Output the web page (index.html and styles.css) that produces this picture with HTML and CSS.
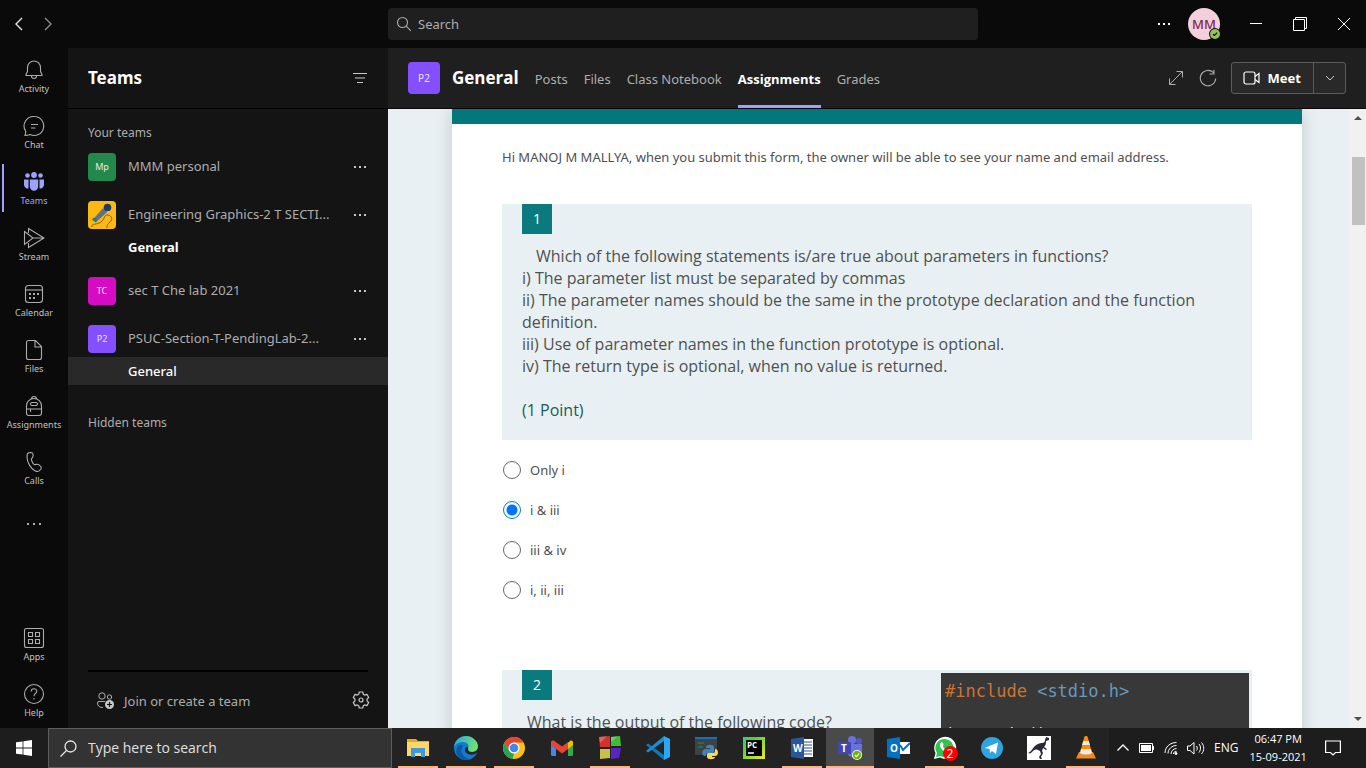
FILE: index.html
```html
<!DOCTYPE html>
<html lang="en">
<head>
<meta charset="utf-8">
<title>General | Microsoft Teams</title>
<link rel="stylesheet" href="styles.css">
</head>
<body>
<div class="desktop">
  <header class="titlebar">
    <nav class="history" aria-label="History">
      <button class="icon-btn" aria-label="Back"><svg width="10" height="14" viewBox="0 0 10 14" fill="none" stroke="#e6e6e6" stroke-width="1.4"><path d="M8 1L2 7l6 6"/></svg></button>
      <button class="icon-btn" aria-label="Forward"><svg width="10" height="14" viewBox="0 0 10 14" fill="none" stroke="#8a8a8a" stroke-width="1.4"><path d="M2 1l6 6-6 6"/></svg></button>
    </nav>
    <label class="search">
      <svg width="16" height="16" viewBox="0 0 16 16" fill="none" stroke="#adadad" stroke-width="1.1"><circle cx="6.5" cy="6.500" r="5"/><path d="M10.200 10.200l4.600 4.600"/></svg>
      <input type="text" placeholder="Search" aria-label="Search">
    </label>
    <div class="window-tools">
      <button class="icon-btn more" aria-label="Settings and more"><svg width="14" height="4" viewBox="0 0 14 4" fill="#fff"><path d="M1 1h2v2H1zM6 1h2v2H6zM11 1h2v2h-2z"/></svg></button>
      <button class="avatar" aria-label="Account">MM<svg class="presence" width="12" height="12" viewBox="0 0 12 12"><circle cx="6" cy="6" r="6" fill="#0a0a0a"/><circle cx="6" cy="6" r="5" fill="#92c353"/><path d="M4 6.200l1.400 1.300L8.200 4.800" fill="none" stroke="#0a0a0a" stroke-width="1.200"/></svg></button>
      <button class="icon-btn win" aria-label="Minimize"><svg width="12" height="2" viewBox="0 0 12 2"><path d="M0 0h12v1H0z" fill="#fff"/></svg></button>
      <button class="icon-btn win" aria-label="Restore"><svg width="14" height="14" viewBox="0 0 14 14" fill="none" stroke="#fff"><path d="M.5 2.500h11v11H.5zM2.500 2.500v-2h11v11h-2"/></svg></button>
      <button class="icon-btn win" aria-label="Close"><svg width="12" height="12" viewBox="0 0 12 12" stroke="#fff"><path d="M0 0l12 12M12 0L0 12"/></svg></button>
    </div>
  </header>

  <div class="app">
    <nav class="rail" aria-label="Apps">
      <a class="rail-item" href="#"><svg viewBox="0 0 22 22"><path d="M3 16.500v-1l1.500-3V8.500a6.500 6.500 0 0 1 13 0v4l1.500 3v1zM8.500 17a2.500 2.500 0 0 0 5 0"/></svg>Activity</a>
      <a class="rail-item" href="#"><svg viewBox="0 0 22 22"><path d="M11.500 1.500a9.500 9.500 0 1 1-4.500 18c-2 .8-3.500 1-5 1 .6-1.500.8-2.800.7-4.300A9.500 9.500 0 0 1 11.500 1.500zM8 9.500h7M8 13h4.500"/></svg>Chat</a>
      <a class="rail-item rail-item--active" href="#"><svg viewBox="0 0 22 22"><circle cx="4.500" cy="4.500" r="2.300"/><circle cx="17.500" cy="4.500" r="2.300"/><circle cx="11" cy="4" r="2.900"/><path d="M1 8.500h4.500v9A4 4 0 0 1 1 14zM21 8.500h-4.500v9A4 4 0 0 0 21 14zM6.800 8.500h8.400v7a4.200 4.200 0 0 1-8.400 0z"/></svg>Teams</a>
      <a class="rail-item" href="#"><svg viewBox="0 0 22 22"><path d="M5.500 6V1.500L21 11 5.500 20.500V16M1.500 4.500L10 11l-8.500 6.500zM10 11h11"/></svg>Stream</a>
      <a class="rail-item" href="#"><svg viewBox="0 0 22 22"><rect x="2.500" y="2.500" width="17" height="17" rx="3"/><path d="M2.500 7h17"/><path d="M6 11h2M10 11h2M14 11h2M6 15h2M10 15h2" stroke-width="2"/></svg>Calendar</a>
      <a class="rail-item" href="#"><svg viewBox="0 0 22 22"><path d="M5.500 1.500h7l6 6v11a2 2 0 0 1-2 2h-11a2 2 0 0 1-2-2v-15a2 2 0 0 1 2-2zM12 1.500V8h6.500"/></svg>Files</a>
      <a class="rail-item" href="#"><svg viewBox="0 0 22 22"><path d="M3.500 11a7.500 7.500 0 0 1 15 0v7a2.500 2.500 0 0 1-2.500 2.500H6A2.500 2.500 0 0 1 3.500 18zM8.500 4a2.500 2.500 0 0 1 5 0M3.500 14h15M7.500 14v3"/><rect x="7.500" y="7.500" width="7" height="3" rx="1.500"/></svg>Assignments</a>
      <a class="rail-item" href="#"><svg viewBox="0 0 22 22"><path d="M5.500 1.800L8 1.500c1 0 1.700.7 2 1.800.5 2 0 3-1.500 4.500-.5.500.8 4 2.500 5.500.7.700 1.500.3 2.500 0 1.600-.5 2.600.3 4.300 2.200.8 1 .6 1.800 0 2.800-1.300 2-3.300 2.700-5.500 1.700-4.500-2-8.300-9-8.300-14 0-2 .3-3.700 1.500-4.200z"/></svg>Calls</a>
      <button class="rail-item rail-more" aria-label="More apps"><svg viewBox="0 0 22 22"><path d="M4 10h2v2H4zM10 10h2v2h-2zM16 10h2v2h-2z" fill="#adadad" stroke="none"/></svg></button>
      <a class="rail-item rail-bottom" href="#"><svg viewBox="0 0 22 22"><rect x="1.500" y="1.500" width="19" height="19" rx="2"/><path d="M5.500 5.500h4v4h-4zM12.500 5.500h4v4h-4zM5.500 12.500h4v4h-4zM12.500 12.500h4v4h-4z"/></svg>Apps</a>
      <a class="rail-item" href="#"><svg viewBox="0 0 22 22"><circle cx="11" cy="11" r="9.500"/><path d="M8.200 8.500c0-3.800 5.600-3.600 5.600-.3 0 2.200-2.800 2.200-2.800 5M11 15v1.500"/></svg>Help</a>
    </nav>

    <aside class="teams">
      <div class="teams-head"><h1>Teams</h1>
        <button class="icon-btn" aria-label="Filter"><svg width="16" height="10" viewBox="0 0 16 10" stroke="#c8c8c8"><path d="M1 .5h14M3 5h10M5 9.500h6"/></svg></button>
      </div>
      <div class="teams-list">
        <h2 class="group-label">Your teams</h2>
        <section class="team">
          <div class="team-row"><span class="logo logo--green">Mp</span><span class="team-name">MMM personal</span><button class="dots" aria-label="More options"></button></div>
        </section>
        <section class="team team--open">
          <div class="team-row"><span class="logo logo--yellow"><svg width="28" height="28" viewBox="0 0 28 28"><path d="M4 26c-1-4 5-2 9-5s3-8 7-7 5 4 2 7-3 3-3 6" fill="none" stroke="#8a5c10" stroke-width="1"/><path d="M4.500 19L16 6l4.500 4L8 21z" fill="#5d7389"/><path d="M4 18.500l4 3 1-2.500-3-2.500z" fill="#14808f"/><path d="M15 7l5 4.500 1.500-1.500-5-4.500z" fill="#c9d7df"/><circle cx="19.500" cy="6.500" r="3.800" fill="#1d3c6c"/></svg></span><span class="team-name">Engineering Graphics-2 T SECTI...</span><button class="dots" aria-label="More options"></button></div>
          <a class="channel channel--unread" href="#">General</a>
        </section>
        <section class="team">
          <div class="team-row"><span class="logo logo--pink">TC</span><span class="team-name">sec T Che lab 2021</span><button class="dots" aria-label="More options"></button></div>
        </section>
        <section class="team team--open">
          <div class="team-row"><span class="logo logo--purple">P2</span><span class="team-name">PSUC-Section-T-PendingLab-2...</span><button class="dots" aria-label="More options"></button></div>
          <a class="channel channel--selected" href="#">General</a>
        </section>
        <h2 class="group-label group-label--hidden">Hidden teams</h2>
      </div>
      <div class="teams-foot">
        <button class="join"><svg width="20" height="18" viewBox="0 0 20 18" fill="none" stroke="#adadad"><circle cx="6" cy="4" r="3.200"/><circle cx="13.500" cy="5" r="2.200"/><path d="M9 9.500H3A1.500 1.500 0 0 0 1.500 11c0 3 2 4.500 5.500 4.500"/><circle cx="13.500" cy="12.500" r="4.500" fill="#c8c8c8" stroke="none"/><path d="M13.500 10v5M11 12.500h5" stroke="#141414" stroke-width="1.200"/></svg>Join or create a team</button>
        <button class="icon-btn" aria-label="Manage teams"><svg width="18" height="18" viewBox="0 0 18 18" fill="none" stroke="#c8c8c8" stroke-width="1.200"><path d="M7.200 1h3.600l.5 2.300 1.400.8 2.200-.7 1.800 3.100L15 8.200v1.600l1.700 1.700-1.800 3.100-2.200-.7-1.400.8-.5 2.300H7.200l-.5-2.300-1.400-.8-2.200.7-1.800-3.100L3 9.800V8.200L1.300 6.500l1.800-3.100 2.200.7 1.400-.8z" stroke-linejoin="round"/><circle cx="9" cy="9" r="2"/></svg></button>
      </div>
    </aside>

    <main class="content">
      <div class="channel-head">
        <span class="logo logo--purple logo--large">P2</span>
        <h2>General</h2>
        <nav class="tabs">
          <a href="#">Posts</a><a href="#">Files</a><a href="#">Class Notebook</a><a class="tab--active" href="#">Assignments</a><a href="#">Grades</a>
        </nav>
        <button class="icon-btn tool" aria-label="Expand"><svg width="16" height="16" viewBox="0 0 16 16" fill="none" stroke="#adadad"><path d="M8.500 1.500h6v6M1.500 8.500v6h6M14.500 1.500l-13 13"/></svg></button>
        <button class="icon-btn tool" aria-label="Reload"><svg width="18" height="18" viewBox="0 0 18 18" fill="none" stroke="#adadad" stroke-width="1.100"><path d="M16.700 9.500A7.700 7.700 0 1 1 14.500 3.700M15 .8v4.200h-4.500"/></svg></button>
        <div class="meet"><button class="meet-main"><svg width="18" height="14" viewBox="0 0 18 14" fill="none" stroke="#fff" stroke-width="1.200"><rect x="1" y="1" width="11" height="12" rx="2"/><path d="M12 5.500l4-3v9l-4-3"/></svg>Meet</button><button class="meet-menu" aria-label="Meet options"><svg width="10" height="6" viewBox="0 0 10 6" fill="none" stroke="#c8c8c8"><path d="M1 1l4 4 4-4"/></svg></button></div>
      </div>

      <div class="viewport">
        <form class="sheet">
          <p class="notice">Hi MANOJ M MALLYA, when you submit this form, the owner will be able to see your name and email address.</p>
          <fieldset class="question">
            <div class="prompt">
              <span class="number">1</span>
              <div class="prompt-text">
                <p class="lead">Which of the following statements is/are true about parameters in functions?</p>
                <p>i) The parameter list must be separated by commas</p>
                <p>ii) The parameter names should be the same in the prototype declaration and the function definition.</p>
                <p>iii) Use of parameter names in the function prototype is optional.</p>
                <p>iv) The return type is optional, when no value is returned.</p>
                <p class="points">(1 Point)</p>
              </div>
            </div>
            <div class="choices">
              <label><input type="radio" name="q1">Only i</label>
              <label><input type="radio" name="q1" checked>i &amp; iii</label>
              <label><input type="radio" name="q1">iii &amp; iv</label>
              <label><input type="radio" name="q1">i, ii, iii</label>
            </div>
          </fieldset>
          <fieldset class="question">
            <div class="prompt prompt--split">
              <div>
                <span class="number">2</span>
                <div class="prompt-text"><p class="indent">What is the output of the following code?</p></div>
              </div>
              <pre class="code"><span class="directive">#include</span> <span class="header">&lt;stdio.h&gt;</span>

int main()</pre>
            </div>
          </fieldset>
        </form>
        <div class="scrollbar" aria-hidden="true">
          <svg width="8" height="4" viewBox="0 0 8 4"><path d="M0 4l4-4 4 4z" fill="#505050"/></svg>
          <div class="thumb"></div>
          <svg class="down" width="8" height="4" viewBox="0 0 8 4"><path d="M0 0l4 4 4-4z" fill="#505050"/></svg>
        </div>
      </div>
    </main>
  </div>

  <footer class="taskbar">
    <button class="start" aria-label="Start"><svg width="16" height="16" viewBox="0 0 16 16" fill="#fff"><path d="M0 2.300l6.600-.9v6.200H0zM7.400 1.300L16 0v7.600H7.400zM0 8.400h6.600v6.200L0 13.700zM7.400 8.400H16V16l-8.600-1.200z"/></svg></button>
    <label class="task-search"><svg width="17" height="17" viewBox="0 0 17 17" fill="none" stroke="#e8e8e8" stroke-width="1.300"><circle cx="10.500" cy="6.500" r="5.500"/><path d="M6.500 10.500l-6 6"/></svg><input type="text" placeholder="Type here to search" aria-label="Type here to search"></label>
    <div class="apps">
      <button class="task running" aria-label="File Explorer"><svg viewBox="0 0 24 24"><path d="M1 3h9l2 2h11v15H1z" fill="#e9a820"/><path d="M1 6h22v14H1z" fill="#ffd766"/><path d="M5 12h14v9h-4v-4H9v4H5z" fill="#3f97de"/></svg></button>
      <button class="task running" aria-label="Edge"><svg viewBox="0 0 24 24"><defs><linearGradient id="edge" x2="1" y2=".3"><stop stop-color="#22a6e8"/><stop offset="1" stop-color="#6ee070"/></linearGradient></defs><circle cx="12" cy="12" r="12" fill="#1479cf"/><path d="M0 11C1 4 6 0 12 0s12 5 12 10c0 4-3 6-6 6s-4-1-4-3c2-4-1-7-5-7-5 0-8 3-9 5z" fill="url(#edge)"/><path d="M9 10c-4 5 0 12 7 13C6 26 0 18 3 12c1-3 4-4 6-2z" fill="#0c59a4"/><path d="M14 13c0 2 1 3 4 3 2 0 5-1 6-4v4l-3 2c-4 2-9 0-10-3-.5-2 1-4 2-4 1 .5 1 1 1 2z" fill="#252627"/></svg></button>
      <button class="task running" aria-label="Chrome"><svg viewBox="0 0 24 24"><circle cx="12" cy="12" r="11" fill="#fbc116"/><path d="M2.500 6.500A11 11 0 0 1 21.500 6.500H12l-4.700 8.200z" fill="#ea4335"/><path d="M2.500 6.500l4.800 8.200L12 17.500l-1.500 5.400A11 11 0 0 1 2.500 6.500z" fill="#2ba24c"/><circle cx="12" cy="12" r="5.500" fill="#fff"/><circle cx="12" cy="12" r="4.300" fill="#4285f4"/></svg></button>
      <button class="task" aria-label="Gmail"><svg viewBox="0 0 24 24"><path d="M1 6h5v14H2.500A1.500 1.500 0 0 1 1 18.500z" fill="#4285f4"/><path d="M18 6h5v12.500a1.500 1.500 0 0 1-1.500 1.500H18z" fill="#34a853"/><path d="M18 7l2-2c1.500-1 3 0 3 1.500V9l-5 4z" fill="#fbbc04"/><path d="M1 9V6.500C1 4.500 3 4 4.500 5L12 10.500l6-4.500v7l-6 4.500L1 9z" fill="#ea4335"/></svg></button>
      <button class="task running" aria-label="Code::Blocks"><svg viewBox="0 0 24 24"><path d="M1 1l11-1v11H2z" fill="#d6322b"/><path d="M13 1l9-1 1 10H13z" fill="#3fbf36"/><path d="M2 13h10v9l-10 1z" fill="#c9c04a"/><path d="M13 12h10l-2 10-8 1z" fill="#5a24c8"/><path d="M1 1l8-1-7 7zM13 1l7-1-7 6z" fill="#fff" opacity=".25"/></svg></button>
      <button class="task" aria-label="Visual Studio Code"><svg viewBox="0 0 24 24"><path d="M0 9l2-1.500L18 19v5L0 9z" fill="#1276b8"/><path d="M0 15l2 1.500L18 5V0L0 15z" fill="#1b8fd6"/><path d="M18 0l6 3v18l-6 3z" fill="#2ca7f2"/></svg></button>
      <button class="task" aria-label="Python"><svg viewBox="0 0 24 24"><path d="M1 1h22v18H1z" fill="#3a4446"/><path d="M1 1h22v2H1z" fill="#1672b5"/><path d="M4 7h6M4 11h5" stroke="#3f7248" stroke-width="1.500"/><path d="M12 11c0-3 8-3 8 0v4c0 2-1 2-3 2h-3c-2 0-2 1-2 3-5 1-5-7 0-7h4v-1h-4z" fill="#4382b8"/><path d="M21 13c4 0 4 7 0 7h-3v1h3c0 3-8 3-8 0v-2c0-2 1-2 3-2h3c2 0 2-1 2-4z" fill="#ffd94d"/></svg></button>
      <button class="task" aria-label="PyCharm"><svg viewBox="0 0 24 24"><defs><linearGradient id="pc" y2="1"><stop stop-color="#21d789"/><stop offset=".3" stop-color="#4fd62a"/><stop offset="1" stop-color="#f5e53b"/></linearGradient></defs><path d="M1 1h22v22H1z" fill="url(#pc)"/><path d="M4 4h16v16H4z"/><path d="M6 17h6" stroke="#fff" stroke-width="1.500"/><text class="g8" x="5" y="12">PC</text></svg></button>
      <button class="task running" aria-label="Word"><svg viewBox="0 0 24 24"><path d="M12 3h11v18H12z" fill="#fff"/><path d="M14 6h8M14 9h8M14 12h8M14 15h8M14 18h8" stroke="#2b579a"/><path d="M1 3l13-2v22L1 21z" fill="#2b579a"/><text class="g10" x="3" y="16">W</text></svg></button>
      <button class="task running task--active" aria-label="Teams"><svg viewBox="0 0 24 24"><circle cx="14" cy="4" r="4" fill="#6b72d6"/><circle cx="21" cy="5" r="3" fill="#505ac9"/><path d="M8 8h16v7a6 6 0 0 1-6 7c-5 0-9-3-10-7z" fill="#6872dd"/><path d="M0 6h13v12H0z" fill="#4248ab"/><text class="g10" x="3" y="16">T</text><circle cx="19" cy="19" r="5" fill="#fff"/><circle cx="19" cy="19" r="4.200" fill="#6bb700"/><path d="M16.800 19l1.600 1.600 2.800-3" fill="none" stroke="#fff" stroke-width="1.200"/></svg></button>
      <button class="task" aria-label="Outlook"><svg viewBox="0 0 24 24"><path d="M12 6h12v12H12z" fill="#fff"/><path d="M14 9l3 5 7-7" fill="none" stroke="#0072c6" stroke-width="2"/><path d="M1 3l13-2v22L1 21z" fill="#0072c6"/><text class="g10" x="4" y="16">O</text></svg></button>
      <button class="task running" aria-label="WhatsApp, 2 new"><svg viewBox="0 0 24 24"><path d="M1 23l1.500-6A11 11 0 1 1 7 21.500z" fill="#fff"/><path d="M3 21l1-4a9 9 0 1 1 3.500 3z" fill="#2cc64f"/><path d="M8 6.500c1.500-1 2.500 1 2.500 2.500-1 1-.5 2 1 3.500s2.500 1.500 3.500.5c1 0 3 1 2 2.500-2 2.500-6 .5-8-2s-3-5-1-7z" fill="#fff"/></svg><span class="count">2</span></button>
      <button class="task" aria-label="Telegram"><svg viewBox="0 0 24 24"><circle cx="12" cy="12" r="11" fill="#2ca5e0"/><path d="M4.500 12L18 6.500 16 18l-4-3-2 2-.5-4z" fill="#fff"/></svg></button>
      <button class="task" aria-label="Dinosaur"><svg viewBox="0 0 24 24"><path d="M0 0h24v24H0z" fill="#fff"/><path d="M1 17c3-1 4-4 6-6 3-3 5-4 8-4 2 0 3-1 3-3l1-3 3 1v2l-3 1c0 4-1 5-2 6l3 2-1 1-3-2-1 3 1 2-2 4 1 2h-2l-1-2 2-3-1-3-2-1c-3-1-4 0-6 2-1 1-2 2-4 1z" fill="#2c2736"/></svg></button>
      <button class="task running" aria-label="VLC"><svg viewBox="0 0 24 24"><path d="M5 16h14l3 6.500H2z" fill="#f08a1c"/><path d="M12 0c1 0 1.500.5 1.700 1L18 17c-1 3-11 3-12 0l4.300-16c.2-.5.700-1 1.700-1z" fill="#ff8a00"/><path d="M9.300 5h5.400l1.300 4H8zM7 13h10l1 4c-2 2-10 2-12 0z" fill="#e9e9e9"/></svg></button>
    </div>
    <div class="tray">
      <svg width="14" height="10" viewBox="0 0 14 10" fill="none" stroke="#fff" stroke-width="1.300"><path d="M1.500 7.500L7 2l5.500 5.500"/></svg>
      <svg width="16" height="10" viewBox="0 0 16 10"><path d="M.5.5h13v9H.5z" fill="none" stroke="#fff"/><path d="M2 2h10v6H2zM14 3h1v4h-1z" fill="#fff"/></svg>
      <svg width="14" height="14" viewBox="0 0 14 14" fill="none" stroke="#fff"><path d="M1 12C1 6 6 1.500 12.500 1.500M4 12.500C4 8 8 4.500 12.500 4.500M7 13c0-3 2.500-5.500 5.500-5.500M9.500 13c0-1.500 1-2.700 3-2.700"/><circle cx="12" cy="12.500" r="1" fill="#fff"/></svg>
      <svg width="18" height="14" viewBox="0 0 18 14" fill="none" stroke="#fff"><path d="M.5 5v4.500H3l4 3.500V1.500L3 5zM9.500 5c1 1.500 1 3 0 4.500M12 3c2 2.500 2 5.500 0 8.500M14.500 1.500c3 3.500 3 8 0 11.500"/></svg>
      <span class="lang">ENG</span>
      <time class="clock"><span>06:47 PM</span><span>15-09-2021</span></time>
      <button class="icon-btn notify" aria-label="Notifications"><svg width="16" height="17" viewBox="0 0 16 17" fill="none" stroke="#fff" stroke-width="1.200"><path d="M.6 1h14.800v11.500H10.500L8 15l-2.500-2.500H.6z"/></svg></button>
    </div>
  </footer>
</div>
</body>
</html>
```
FILE: styles.css
```css
* { box-sizing: border-box; }
body { margin: 0; font-family: "Noto Sans", "Open Sans", sans-serif; font-size: 13px; line-height: 20px; color: #adadad; background: #0a0a0a; }
h1, h2, p, pre, fieldset { margin: 0; padding: 0; border: 0; }
button, input { font: inherit; color: inherit; background: none; border: 0; padding: 0; margin: 0; }
a { color: inherit; text-decoration: none; }
svg { display: block; flex: none; }
.icon-btn { display: flex; align-items: center; justify-content: center; }

.desktop { height: 100vh; display: grid; grid-template-rows: 48px minmax(0, 1fr) 40px; overflow: hidden; }

.titlebar { display: grid; grid-template-columns: 388px minmax(0, 590px) minmax(0, 1fr); align-items: center; background: #0a0a0a; }
.history { display: flex; gap: 19px; padding-left: 14px; }
.search { height: 32px; display: flex; align-items: center; gap: 6px; padding: 0 8px; background: #1f1f1f; border-radius: 4px; }
.search input { flex: 1; min-width: 0; outline: 0; }
input::placeholder { color: inherit; opacity: 1; }
.window-tools { display: flex; align-items: center; justify-content: flex-end; }
.more { margin-right: 17px; }
.avatar { position: relative; width: 32px; height: 32px; margin-right: 14px; border-radius: 50%; background: #f4d0dc; color: #7a2c4a; font-size: 13px; font-weight: 500; }
.presence { position: absolute; right: -1px; bottom: 0; }
.win { width: 44px; height: 32px; }

.app { display: grid; grid-template-columns: 68px 320px minmax(0, 1fr); min-height: 0; }

.rail { display: flex; flex-direction: column; background: #0a0a0a; }
.rail-item { position: relative; height: 56px; display: flex; flex-direction: column; align-items: center; padding-top: 11px; font-size: 9px; line-height: 16px; white-space: nowrap; color: #c0c0c0; }
.rail-item svg { width: 22px; height: 22px; fill: none; stroke: #adadad; stroke-width: 1.1; }
.rail-item--active { color: #9ea2ff; }
.rail-item--active svg { fill: #9ea2ff; stroke: none; }
.rail-item--active::before { content: ""; position: absolute; left: 2px; top: 4px; width: 2px; height: 48px; background: #9ea2ff; }
.rail-more { padding-top: 17px; }
.rail-bottom { margin-top: auto; }

.teams { display: flex; flex-direction: column; min-height: 0; background: #141414; }
.teams-head { height: 61px; display: flex; align-items: center; justify-content: space-between; padding: 0 20px; border-bottom: 1px solid #000; }
.teams-head h1 { font-size: 17px; line-height: 24px; color: #fff; }
.teams-list { flex: 1; min-height: 0; overflow: hidden; padding-top: 14px; }
.group-label { padding: 0 20px; margin-bottom: 10px; font-size: 12px; font-weight: 400; line-height: 20px; }
.group-label--hidden { margin-top: 28px; }
.team + .team { margin-top: 20px; }
.team--open + .team { margin-top: 16px; }
.team-row { display: flex; align-items: center; height: 28px; padding: 0 20px; }
.team-name { flex: 1; margin: 0 12px; line-height: 28px; padding-bottom: 2px; white-space: nowrap; }
.logo { width: 28px; height: 28px; display: flex; align-items: center; justify-content: center; flex: none; overflow: hidden; border-radius: 4px; font-size: 9px; color: #e8e8e8; }
.logo--green { background: #23884b; }
.logo--yellow { background: #fdb913; }
.logo--pink { background: #d60cc4; }
.logo--purple { background: #8450ff; }
.logo--large { width: 32px; height: 32px; font-size: 10px; }
.dots { width: 16px; height: 16px; flex: none; display: flex; align-items: center; justify-content: center; }
.dots::before { content: ""; width: 2px; height: 2px; background: #c8c8c8; box-shadow: -5px 0 #c8c8c8, 5px 0 #c8c8c8; }
.channel { display: block; height: 28px; margin-top: 4px; padding-left: 60px; line-height: 28px; color: #fff; }
.channel--unread { font-weight: 700; }
.channel--selected { background: #292929; font-weight: 500; }
.teams-foot { display: flex; align-items: center; justify-content: space-between; height: 58px; margin: 0 20px; border-top: 2px solid #000; }
.join { display: flex; align-items: center; gap: 8px; padding: 2px 0 0 8px; }
.teams-foot .icon-btn { margin-right: -2px; }

.content { display: flex; flex-direction: column; min-width: 0; min-height: 0; }
.channel-head { flex: none; display: flex; align-items: center; height: 61px; padding: 0 20px; background: #1f1f1f; border-bottom: 1px solid #0d0508; }
.channel-head h2 { margin: 0 16px 0 12px; font-size: 17px; line-height: 24px; color: #fff; font-family: "Open Sans", sans-serif; }
.tabs { flex: 1; display: flex; gap: 16px; height: 60px; }
.tabs a { line-height: 62px; border-bottom: 3px solid transparent; white-space: nowrap; height: 60px; }
.tabs .tab--active { color: #fff; font-weight: 700; font-family: "Open Sans", sans-serif; border-color: #9ea2ff; }
.tool { width: 18px; margin-right: 14px; }
.meet { display: flex; height: 32px; border: 1px solid #5c5c5c; border-radius: 3px; background: #292929; }
.meet-main { display: flex; align-items: center; gap: 7px; padding: 0 12px 0 11px; color: #fff; font-weight: 700; }
.meet-menu { width: 32px; display: flex; align-items: center; justify-content: center; border-left: 1px solid #5c5c5c; }

.viewport { flex: 1; min-height: 0; display: flex; overflow: hidden; background: #e8f0f3; }
.sheet { flex: 1; min-width: 0; height: max-content; margin: 0 48px 0 64px; padding: 0 50px 60px; background: #fff; border-top: 15px solid #03787c; box-shadow: 0 0 16px rgba(0, 0, 0, .16); color: #505050; }
.notice { padding: 23px 0 37px; }
.prompt { background: #e8f0f3; padding: 0 20px; font-family: "Open Sans", sans-serif; font-size: 16px; line-height: 22px; }
.number { display: block; width: 30px; height: 30px; background: #0b7a7e; color: #fff; font-size: 14px; line-height: 30px; text-align: center; }
.prompt-text { padding: 11px 0 19px; }
.lead { padding-left: 14px; }
.indent { padding-left: 5px; }
.points { margin-top: 22px; color: #1a5c5c; }
.choices { display: flex; flex-direction: column; padding: 10px 0 60px; }
.choices label { display: flex; align-items: center; gap: 9px; height: 40px; }
.choices input { appearance: none; width: 18px; height: 18px; margin-left: 1px; border: 1px solid #666; border-radius: 50%; background: #fff; }
.choices input:checked { border-color: #0075ff; background: radial-gradient(circle, #0075ff 5px, #fff 6px); }
.prompt--split { display: flex; justify-content: space-between; padding-right: 3px; }
.code { width: 308px; margin-top: 3px; padding: 7px 4px; background: #383838; color: #ddd; font: 17px/22px "DejaVu Sans Mono", monospace; }
.directive { color: #cc7434; }
.header { color: #6897bb; }

.scrollbar { width: 16px; display: flex; flex-direction: column; align-items: center; padding: 7px 0; background: #f1f1f1; }
.thumb { width: 13px; height: 68px; margin-top: 37px; background: #c1c1c1; }
.down { margin-top: auto; }

.taskbar { display: flex; background: #1d1d1d; color: #fff; min-width: 0; }
.start { width: 48px; flex: none; display: flex; align-items: center; justify-content: center; }
.task-search { width: 344px; flex: none; display: flex; align-items: center; gap: 11px; padding: 0 11px; background: #333; border: 1px solid #5e5e5e; color: #e0e0e0; font-family: "Open Sans", sans-serif; font-size: 14px; }
.task-search input { flex: 1; min-width: 0; outline: 0; }
.apps { flex: 1; min-width: 0; display: flex; padding-left: 2px; background: #232323; }
.task { position: relative; flex: 0 1 48px; min-width: 0; display: flex; align-items: center; justify-content: center; }
.task--active ~ .task { flex-basis: 47px; }
.task svg { width: 24px; height: 24px; }
.running::after { content: ""; position: absolute; left: 4px; right: 4px; bottom: 0; height: 2px; background: #ffb57b; }
.task--active { background: #4a4a4a; }
.task--active::after { left: 0; right: 0; }
.count { position: absolute; left: 50%; top: 18px; width: 15px; height: 15px; margin-left: -2px; border-radius: 50%; background: #f00; font-size: 12px; line-height: 15px; text-align: center; }
.g8, .g10 { font-family: "Open Sans", sans-serif; font-weight: 700; fill: #fff; }
.g8 { font-size: 8px; }
.g10 { font-size: 10px; }
.tray { flex: none; width: 257px; display: flex; align-items: center; gap: 9px; padding: 0 25px 0 7px; font-family: "Open Sans", sans-serif; }
.lang { font-size: 12px; }
.clock { display: flex; flex-direction: column; align-items: center; margin-left: 2px; font-size: 11px; line-height: 18px; }
.notify { margin-left: auto; }
```
